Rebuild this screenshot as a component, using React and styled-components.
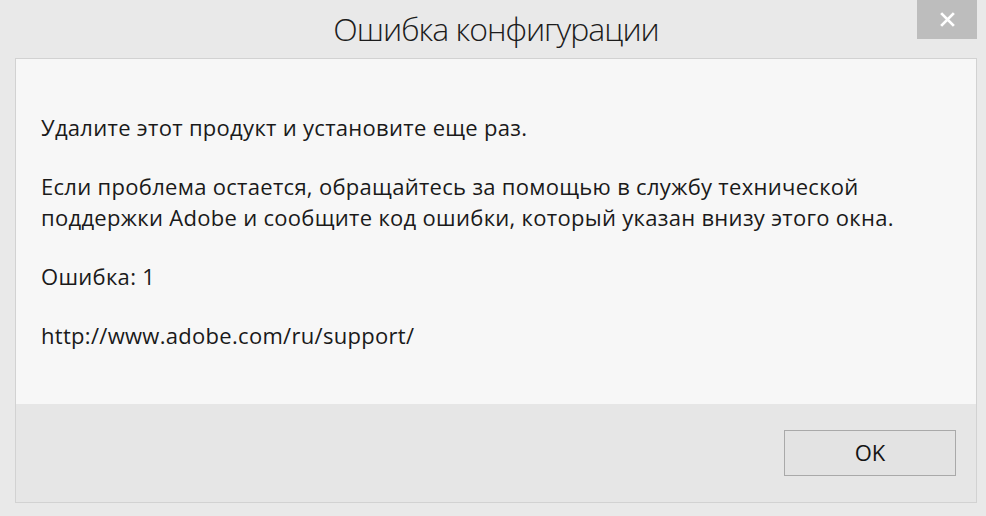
import React from "react";
import styled, { createGlobalStyle } from "styled-components";

const Global = createGlobalStyle`
  html, body { margin: 0; padding: 0; }
  body { background: #e9e9e9; font-family: "Open Sans", "Noto Sans", sans-serif; }
`;

const Window = styled.div`
  width: 986px;
  height: 516px;
  box-sizing: border-box;
  background: #e9e9e9;
  display: flex;
  flex-direction: column;
  padding: 0 9px 13px 15px;
`;

const TitleBar = styled.div`
  height: 58px;
  display: grid;
  grid-template-columns: 1fr auto;
  align-items: start;
`;

const Title = styled.div`
  grid-column: 1 / 3;
  grid-row: 1;
  text-align: center;
  font-family: "Open Sans", sans-serif;
  font-weight: 300;
  font-size: 32px;
  letter-spacing: -1px;
  line-height: 58px;
  color: #1c1c1c;
`;

const CloseButton = styled.div`
  grid-column: 2;
  grid-row: 1;
  width: 60px;
  height: 39px;
  background: #bdbdbd;
  display: flex;
  align-items: center;
  justify-content: center;
  z-index: 1;
`;

const Panel = styled.div`
  flex: 1;
  display: flex;
  flex-direction: column;
  border: 1px solid #d2d2d2;
  background: #f7f7f7;
`;

const Content = styled.div`
  flex: 1;
  padding: 53px 10px 0 25px;
  color: #1a1a1a;
  font-size: 22px;
  letter-spacing: 0.3px;
  line-height: 31px;
`;

const Para = styled.p`
  margin: 0 0 28px 0;
  white-space: nowrap;
`;

const Footer = styled.div`
  height: 98px;
  box-sizing: border-box;
  background: #e6e6e6;
  display: flex;
  justify-content: flex-end;
  align-items: flex-start;
  padding: 26px 20px 0 0;
`;

const OkButton = styled.button`
  width: 172px;
  height: 46px;
  box-sizing: border-box;
  border: 1px solid #a9a9a9;
  background: #e3e3e3;
  font-family: "Open Sans", sans-serif;
  font-size: 22px;
  color: #141414;
  padding: 0 0 2px 0;
`;

export default function App() {
  return (
    <>
      <Global />
      <Window>
        <TitleBar>
          <Title>Ошибка конфигурации</Title>
          <CloseButton>
            <svg width="17" height="17" viewBox="0 0 16 16">
              <path d="M2 2 L14 14 M14 2 L2 14" stroke="#ffffff" strokeWidth="2.6" strokeLinecap="butt" />
            </svg>
          </CloseButton>
        </TitleBar>
        <Panel>
          <Content>
            <Para>Удалите этот продукт и установите еще раз.</Para>
            <Para>
              Если проблема остается, обращайтесь за помощью в службу технической
              <br />
              поддержки Adobe и сообщите код ошибки, который указан внизу этого окна.
            </Para>
            <Para>Ошибка: 1</Para>
            <Para>http://www.adobe.com/ru/support/</Para>
          </Content>
          <Footer>
            <OkButton>OK</OkButton>
          </Footer>
        </Panel>
      </Window>
    </>
  );
}
